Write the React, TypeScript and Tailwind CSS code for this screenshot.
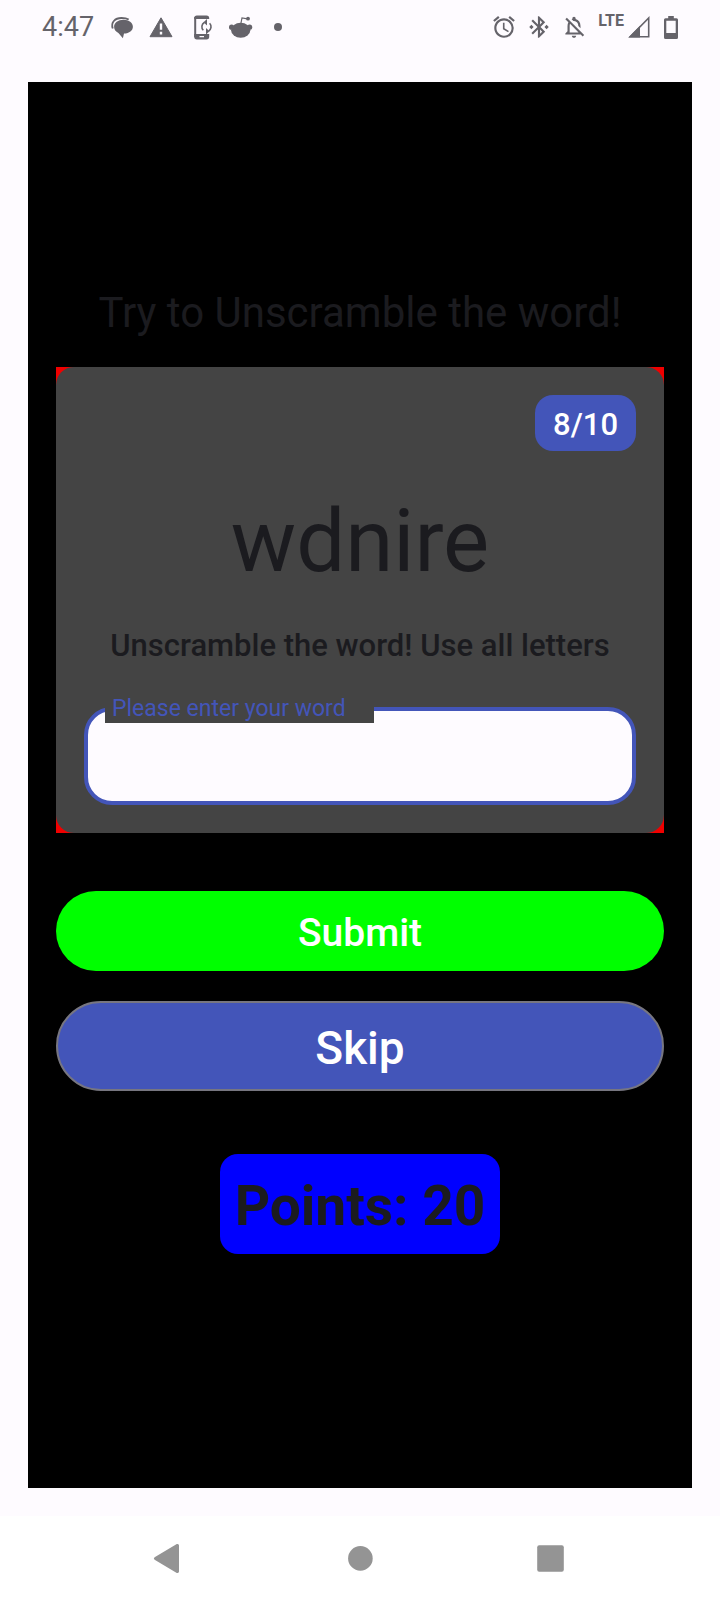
import { useState } from "react";
import type { ReactNode } from "react";
import {
  MdAccessAlarm,
  MdBluetoothConnected,
  MdOutlineNotificationsOff,
} from "react-icons/md";

function MessagesIcon() {
  return (
    <svg viewBox="0 0 26 26" className="size-[26px]" fill="currentColor" aria-hidden="true">
      <path d="M2.800 14.500C0.500 8.500 5 4 11.500 4c3 0 5.500.5 7.200 1.500" fill="none" stroke="currentColor" strokeWidth="1.800" />
      <path d="M13.500 5.700c5.400 0 9.400 2.900 9.400 7 0 3.800-3.600 6.500-8.900 6.900l-1.100 4.600-4.500-5.300c-2.700-1.200-4.300-3.500-4.300-6.200 0-4.100 4-7 9.400-7z" />
    </svg>
  );
}

function WarningIcon() {
  return (
    <svg viewBox="0 0 26 26" className="size-[26px]" aria-hidden="true">
      <path d="M13 3.800 24 22.700H2z" fill="currentColor" stroke="currentColor" strokeWidth="1" strokeLinejoin="round" />
      <path d="M13 9.500v6.300M13 17.700v2.800" stroke="#fefbff" strokeWidth="2.400" />
    </svg>
  );
}

function PhoneSyncIcon() {
  return (
    <svg viewBox="0 0 26 26" className="size-[26px]" fill="none" stroke="currentColor" aria-hidden="true">
      <path d="M5.200 3v20" strokeWidth="2" />
      <path
        d="M4.200 4.200A2.700 2.700 0 0 1 6.900 1.500h9.600a2.700 2.700 0 0 1 2.700 2.700V5h-15z"
        fill="currentColor"
        stroke="none"
      />
      <path
        fillRule="evenodd"
        d="M4.200 20h15v2.800a2.700 2.700 0 0 1-2.700 2.700H6.900a2.700 2.700 0 0 1-2.700-2.700zM9.500 22v1.300h4.500V22z"
        fill="currentColor"
        stroke="none"
      />
      <path d="M13.300 16.300a5 5 0 0 1 1-7.800M19.600 9.300a5 5 0 0 1-1 7.800" strokeWidth="1.600" />
      <path d="M17 5v6.500l-3.500-3.300zM16 14v6.500l3.500-3.300z" fill="currentColor" stroke="none" />
    </svg>
  );
}

function RedditIcon() {
  return (
    <svg viewBox="0 0 26 26" className="size-[26px]" fill="currentColor" aria-hidden="true">
      <ellipse cx="12.700" cy="16.200" rx="9.600" ry="7.500" />
      <circle cx="3.600" cy="13.200" r="2.600" />
      <circle cx="21.600" cy="13.200" r="2.600" />
      <circle cx="20" cy="4.700" r="1.900" />
      <path d="M12.700 10.500l1.300-6.500 5.500.8" fill="none" stroke="currentColor" strokeWidth="1.200" />
    </svg>
  );
}

function SignalIcon() {
  return (
    <svg viewBox="0 0 22 22" className="size-[22px]" aria-hidden="true">
      <path d="M20.700 2v18.800H2.300z" fill="none" stroke="currentColor" strokeWidth="1.600" />
      <path d="M0.300 21.600L12 9.800v11.800z" fill="currentColor" />
    </svg>
  );
}

function BatteryIcon() {
  return (
    <svg viewBox="0 0 14 23" className="h-[23px] w-[14px]" fill="currentColor" aria-hidden="true">
      <path
        fillRule="evenodd"
        d="M4.200 0h5.600v2.300H12.500A1.500 1.500 0 0 1 14 3.800v17.700A1.500 1.500 0 0 1 12.500 23h-11A1.500 1.500 0 0 1 0 21.500V3.800a1.500 1.500 0 0 1 1.500-1.500h2.700zM2.300 4.800v12.200h9.400V4.800z"
      />
    </svg>
  );
}

function StatusBar() {
  return (
    <header className="flex h-[54px] items-center justify-between px-[42px] text-[#65636a]">
      <div className="flex items-center gap-3">
        <time className="mr-1 text-[27px] leading-8">4:47</time>
        <MessagesIcon />
        <WarningIcon />
        <span className="ml-1 flex">
          <PhoneSyncIcon />
        </span>
        <RedditIcon />
        <span className="ml-2 size-2 rounded-full bg-current" />
      </div>
      <div className="flex items-center">
        <div className="flex gap-[9px]">
          <MdAccessAlarm size={26} />
          <MdBluetoothConnected size={26} />
          <MdOutlineNotificationsOff size={26} />
        </div>
        <span className="mr-1 mb-3 ml-[11px] text-base leading-4 font-bold">LTE</span>
        <SignalIcon />
        <span className="ml-[14px] flex">
          <BatteryIcon />
        </span>
      </div>
    </header>
  );
}

function NavButton({ label, children }: { label: string; children: ReactNode }) {
  return (
    <button type="button" aria-label={label} className="flex h-full items-center justify-center">
      <svg viewBox="0 0 36 36" className="size-9" fill="#949494" aria-hidden="true">
        {children}
      </svg>
    </button>
  );
}

function NavigationBar() {
  return (
    <nav className="h-[84px] bg-white">
      <div className="mx-auto grid h-full max-w-[570px] grid-cols-3">
        <NavButton label="Back">
          <path d="M2.600 17.300 24.800 4.100a1.500 1.500 0 0 1 2.200 1.300v26.200a1.500 1.500 0 0 1-2.200 1.300L2.600 19.700a1.500 1.500 0 0 1 0-2.400z" />
        </NavButton>
        <NavButton label="Home">
          <circle cx="18.400" cy="18.400" r="12.300" />
        </NavButton>
        <NavButton label="Recent apps">
          <rect x="5.200" y="5.200" width="26.600" height="26.600" rx="2" />
        </NavButton>
      </div>
    </nav>
  );
}

function GameCard() {
  const [guess, setGuess] = useState("");
  return (
    <section className="bg-[#f00000]">
      <div className="flex flex-col rounded-[18px] bg-[#444444] p-7 text-center text-[#1b1b1f]">
        <span className="self-end rounded-[18px] bg-[#4355b9] px-[18px] pt-2 pb-1 text-[31px] leading-[44px] font-medium text-white">
          8/10
        </span>
        <p className="mt-7 text-[87px] leading-[124px]">wdnire</p>
        <p className="mt-5 text-[31px] leading-[46px] font-medium">
          Unscramble the word! Use all letters
        </p>
        <div className="relative mt-[38px]">
          <input
            id="guess"
            type="text"
            value={guess}
            onChange={(event) => setGuess(event.target.value)}
            className="block h-[98px] w-full rounded-[28px] border-4 border-[#4355b9] bg-[#fefbff] px-7 text-[31px] outline-none"
          />
          <label
            htmlFor="guess"
            className="absolute -top-4 left-[21px] w-[269px] bg-[#444444] px-[7px] pt-1 text-left text-[23px] leading-7 text-[#4355b9]"
          >
            Please enter your word
          </label>
        </div>
      </div>
    </section>
  );
}

export default function App() {
  return (
    <div className="flex min-h-screen flex-col bg-[#fefbff] font-['Roboto',sans-serif]">
      <StatusBar />
      <main className="m-7 flex flex-1 flex-col bg-black px-7 pt-[204px] pb-7">
        <h1 className="mb-[27px] text-center text-[42px] leading-[54px] text-[#1b1b1f]">
          Try to Unscramble the word!
        </h1>
        <GameCard />
        <button
          type="button"
          className="mt-[58px] h-20 rounded-full bg-[#00ff00] pt-1 text-[39px] leading-[46px] font-medium text-white"
        >
          Submit
        </button>
        <button
          type="button"
          className="mt-[30px] h-[90px] rounded-full border-2 border-[#777680] bg-[#4355b9] pt-1 text-[46px] leading-[54px] font-medium text-white"
        >
          Skip
        </button>
        <p className="mt-[63px] self-center rounded-[18px] bg-[#0000ff] px-[15px] pt-5 pb-4 text-[55px] leading-[64px] font-bold text-[#1b1b1f]">
          Points: 20
        </p>
      </main>
      <NavigationBar />
    </div>
  );
}
